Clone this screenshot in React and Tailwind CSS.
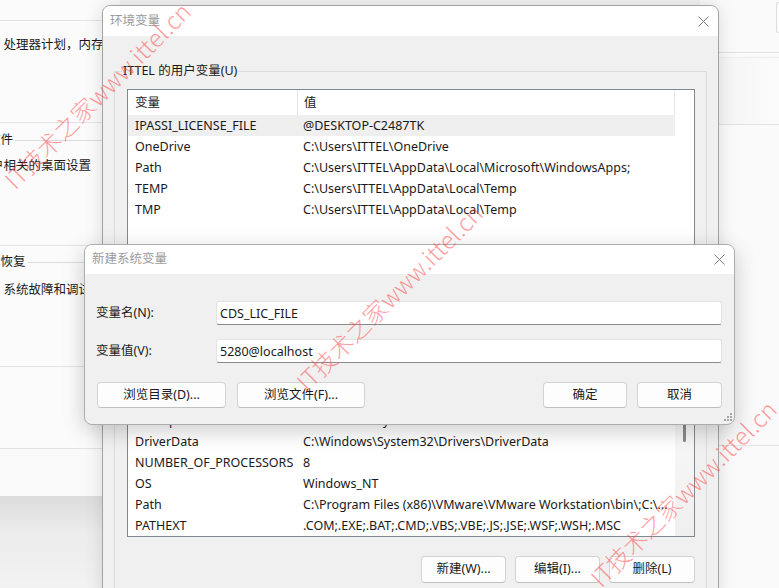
import React from "react";

const userVars = [
  ["IPASSI_LICENSE_FILE", "@DESKTOP-C2487TK"],
  ["OneDrive", "C:\\Users\\ITTEL\\OneDrive"],
  ["Path", "C:\\Users\\ITTEL\\AppData\\Local\\Microsoft\\WindowsApps;"],
  ["TEMP", "C:\\Users\\ITTEL\\AppData\\Local\\Temp"],
  ["TMP", "C:\\Users\\ITTEL\\AppData\\Local\\Temp"],
];

const systemVars = [
  ["ACSetupSvcPort", "23210"],
  ["ACSvcPort", "17532"],
  ["ComSpec", "C:\\Windows\\system32\\cmd.exe"],
  ["DriverData", "C:\\Windows\\System32\\Drivers\\DriverData"],
  ["NUMBER_OF_PROCESSORS", "8"],
  ["OS", "Windows_NT"],
  ["Path", "C:\\Program Files (x86)\\VMware\\VMware Workstation\\bin\\;C:\\..."],
  ["PATHEXT", ".COM;.EXE;.BAT;.CMD;.VBS;.VBE;.JS;.JSE;.WSF;.WSH;.MSC"],
];

function CloseX() {
  return (
    <svg width="11" height="11" viewBox="0 0 11 11" className="shrink-0">
      <path d="M0.5 0.5 L10.5 10.5 M10.5 0.5 L0.5 10.5" stroke="#7d7d7d" strokeWidth="1" fill="none" />
    </svg>
  );
}

function WinButton({ children, className = "" }) {
  return (
    <button
      className={`h-full rounded-[4px] border border-[#d3d3d3] border-b-[#c0c0c0] bg-[#fdfdfd] text-[12.5px] text-[#1a1a1a] ${className}`}
    >
      {children}
    </button>
  );
}

function VarRow({ name, value, selected }) {
  return (
    <div className={`h-[21px] pt-[2px] flex items-center whitespace-nowrap ${selected ? "bg-[#efefef]" : ""}`}>
      <div className="w-[175px] pl-[7px] overflow-hidden">{name}</div>
      <div className="flex-1 overflow-hidden">{value}</div>
    </div>
  );
}

function ListHeader() {
  return (
    <div className="h-[25px] flex items-center border-r border-[#e5e5e5]">
      <div className="w-[170px] h-full pl-[7px] pt-[2px] flex items-center border-r border-[#e5e5e5]">变量</div>
      <div className="pl-[6px] pt-[2px]">值</div>
    </div>
  );
}

export default function App() {
  return (
    <div className="relative w-[779px] h-[588px] overflow-hidden bg-[#f3f3f3] text-[12.5px] text-[#1a1a1a] font-['Noto_Sans','Noto_Sans_CJK_SC',sans-serif]">
      {/* ===== system properties window behind (left) ===== */}
      <div className="absolute left-0 top-0 w-[120px] h-[496px] bg-[#fbfbfb] flex flex-col whitespace-nowrap">
        <div className="h-[21px] shrink-0 border-b border-[#e3e3e3]" />
        <div className="mt-[15px] h-[17px] leading-[17px] ml-[-9px]">，处理器计划，内存使用，以及虚拟内存</div>
        <div className="mt-[69px] border-b border-[#e3e3e3]" />
        <div className="mt-[9px] flex items-center h-[17px]">
          <span className="ml-[-62px]">用户配置文件</span>
          <div className="flex-1 ml-[2px] border-b border-[#dcdcdc]" />
        </div>
        <div className="mt-[8px] h-[17px] leading-[17px] ml-[-84px]">与你的登录帐户相关的桌面设置</div>
        <div className="mt-[71px] border-b border-[#e3e3e3]" />
        <div className="mt-[8px] flex items-center h-[17px]">
          <span className="ml-[-62px]">启动和故障恢复</span>
          <div className="flex-1 ml-[2px] border-b border-[#dcdcdc]" />
        </div>
        <div className="mt-[10px] h-[17px] leading-[17px] ml-[-59px]">系统启动、系统故障和调试信息</div>
        <div className="mt-[68px] border-b border-[#e3e3e3]" />
        <div className="mt-[81px] border-b border-[#e3e3e3]" />
        <div className="flex-1 bg-[#f9f9f9]" />
      </div>
      <div className="absolute left-0 top-[496px] w-[120px] h-[92px] bg-[linear-gradient(to_bottom,#dcdcdc,#ececec_40%,#f2f2f2)]" />

      {/* ===== settings window behind (right) ===== */}
      <div className="absolute left-[700px] top-0 w-[79px] h-[588px] bg-[#fafafa] flex flex-col">
        <div className="h-[52px] shrink-0 flex justify-end pt-[2px]">
          <div className="w-[3px] h-[31px] rounded-l-[4px] border border-r-0 border-[#dddddd] bg-white" />
        </div>
        <div className="border-b border-[#dedede]" />
        <div className="mt-[4px] border-b border-[#ececec]" />
        <div className="h-[66px] bg-[linear-gradient(to_right,#f3f3f3,#fbfbfb)]" />
        <div className="border-b border-[#e2e2e2]" />
        <div className="h-[320px]" />
        <div className="border-b border-[#e2e2e2]" />
      </div>

      {/* ===== 环境变量 ===== */}
      <div className="absolute left-[102px] top-[5px] w-[617px] h-[600px] flex flex-col rounded-t-[8px] border border-[#a3a3a3] bg-[#f0f0f0] shadow-[0_0_18px_rgba(0,0,0,0.13)] overflow-hidden">
        <div className="h-[30px] shrink-0 bg-white flex items-center justify-between pl-[7px] pr-[9px]">
          <span className="text-[#9a9a9a]">环境变量</span>
          <CloseX />
        </div>
        <div className="px-[11px] pt-[27px]">
          <fieldset className="border border-[#dcdcdc] p-0 m-0 pb-[10px]">
            <legend className="ml-[7px] px-[1px] leading-[16px]">ITTEL 的用户变量(U)</legend>
            <div className="mt-[10px] ml-[12px] mr-[11px] h-[170px] border border-[#828790] bg-white flex overflow-hidden">
              <div className="w-[547px]">
                <ListHeader />
                {userVars.map(([n, v], i) => (
                  <VarRow key={n} name={n} value={v} selected={i === 0} />
                ))}
              </div>
            </div>
            <div className="mt-[11px] mr-[11px] h-[27px] flex justify-end gap-[9px]">
              <WinButton className="w-[85px]">新建(N)...</WinButton>
              <WinButton className="w-[85px]">编辑(E)...</WinButton>
              <WinButton className="w-[85px]">删除(D)</WinButton>
            </div>
          </fieldset>

          <fieldset className="mt-[8px] border border-[#dcdcdc] p-0 m-0 pb-[10px]">
            <legend className="ml-[7px] px-[1px] leading-[16px]">系统变量(S)</legend>
            <div className="mt-[10px] ml-[12px] mr-[11px] h-[195px] border border-[#828790] bg-white flex overflow-hidden">
              <div className="w-[547px]">
                <ListHeader />
                {systemVars.map(([n, v]) => (
                  <VarRow key={n} name={n} value={v} />
                ))}
              </div>
              <div className="flex-1 bg-[linear-gradient(to_bottom,#ffffff,#f6f6f6_55%,#efefef)] flex justify-center">
                <div className="mt-[57px] w-[3px] h-[42px] rounded-full bg-[#8a8a8a]" />
              </div>
            </div>
            <div className="mt-[19px] mr-[11px] h-[27px] flex justify-end gap-[9px]">
              <WinButton className="w-[85px]">新建(W)...</WinButton>
              <WinButton className="w-[85px]">编辑(I)...</WinButton>
              <WinButton className="w-[86px]">删除(L)</WinButton>
            </div>
          </fieldset>
        </div>
      </div>

      {/* ===== 新建系统变量 ===== */}
      <div className="absolute left-[84px] top-[244px] w-[651px] h-[181px] flex flex-col rounded-[8px] border border-[#adadad] bg-[#f0f0f0] shadow-[0_6px_22px_rgba(0,0,0,0.2)] overflow-hidden">
        <div className="h-[29px] shrink-0 bg-white flex items-center justify-between pl-[7px] pr-[9px]">
          <span className="text-[#9a9a9a]">新建系统变量</span>
          <CloseX />
        </div>
        <div className="relative flex-1 pl-[11px] pr-[12px] pt-[27px]">
          <div className="h-[24px] flex items-center">
            <label className="w-[120px]">变量名(N):</label>
            <input
              readOnly
              defaultValue="CDS_LIC_FILE"
              className="flex-1 h-full bg-white border border-[#e3e3e3] border-b-[#8a8a8a] rounded-[3px] pl-[3px] text-[12.5px] text-[#1a1a1a] outline-none"
            />
          </div>
          <div className="mt-[14px] h-[24px] flex items-center">
            <label className="w-[120px]">变量值(V):</label>
            <input
              readOnly
              defaultValue="5280@localhost"
              className="flex-1 h-full bg-white border border-[#e3e3e3] border-b-[#8a8a8a] rounded-[3px] pl-[3px] text-[12.5px] text-[#1a1a1a] outline-none"
            />
          </div>
          <div className="mt-[19px] h-[26px] flex items-center">
            <div className="ml-[1px] h-full flex gap-[11px]">
              <WinButton className="w-[129px]">浏览目录(D)...</WinButton>
              <WinButton className="w-[128px]">浏览文件(F)...</WinButton>
            </div>
            <div className="ml-auto h-full flex gap-[10px]">
              <WinButton className="w-[84px]">确定</WinButton>
              <WinButton className="w-[85px]">取消</WinButton>
            </div>
          </div>
          <svg width="9" height="9" viewBox="0 0 9 9" className="absolute right-[2px] bottom-[3px]">
            <g fill="#a5a5a5">
              <rect x="7" y="1" width="2" height="2" />
              <rect x="4" y="4" width="2" height="2" />
              <rect x="7" y="4" width="2" height="2" />
              <rect x="1" y="7" width="2" height="2" />
              <rect x="4" y="7" width="2" height="2" />
              <rect x="7" y="7" width="2" height="2" />
            </g>
          </svg>
        </div>
      </div>

      {/* ===== watermark ===== */}
      <span className="absolute left-[97px] top-[95px] -translate-x-1/2 -translate-y-1/2 -rotate-45 whitespace-nowrap text-[24px] leading-none font-light text-[#ff3b3b]/50 pointer-events-none font-['Noto_Sans_CJK_SC',sans-serif]">
        IT技术之家www.ittel.cn
      </span>
      <span className="absolute left-[389px] top-[297px] -translate-x-1/2 -translate-y-1/2 -rotate-45 whitespace-nowrap text-[24px] leading-none font-light text-[#ff3b3b]/50 pointer-events-none font-['Noto_Sans_CJK_SC',sans-serif]">
        IT技术之家www.ittel.cn
      </span>
      <span className="absolute left-[683px] top-[493px] -translate-x-1/2 -translate-y-1/2 -rotate-45 whitespace-nowrap text-[24px] leading-none font-light text-[#ff3b3b]/50 pointer-events-none font-['Noto_Sans_CJK_SC',sans-serif]">
        IT技术之家www.ittel.cn
      </span>
    </div>
  );
}
